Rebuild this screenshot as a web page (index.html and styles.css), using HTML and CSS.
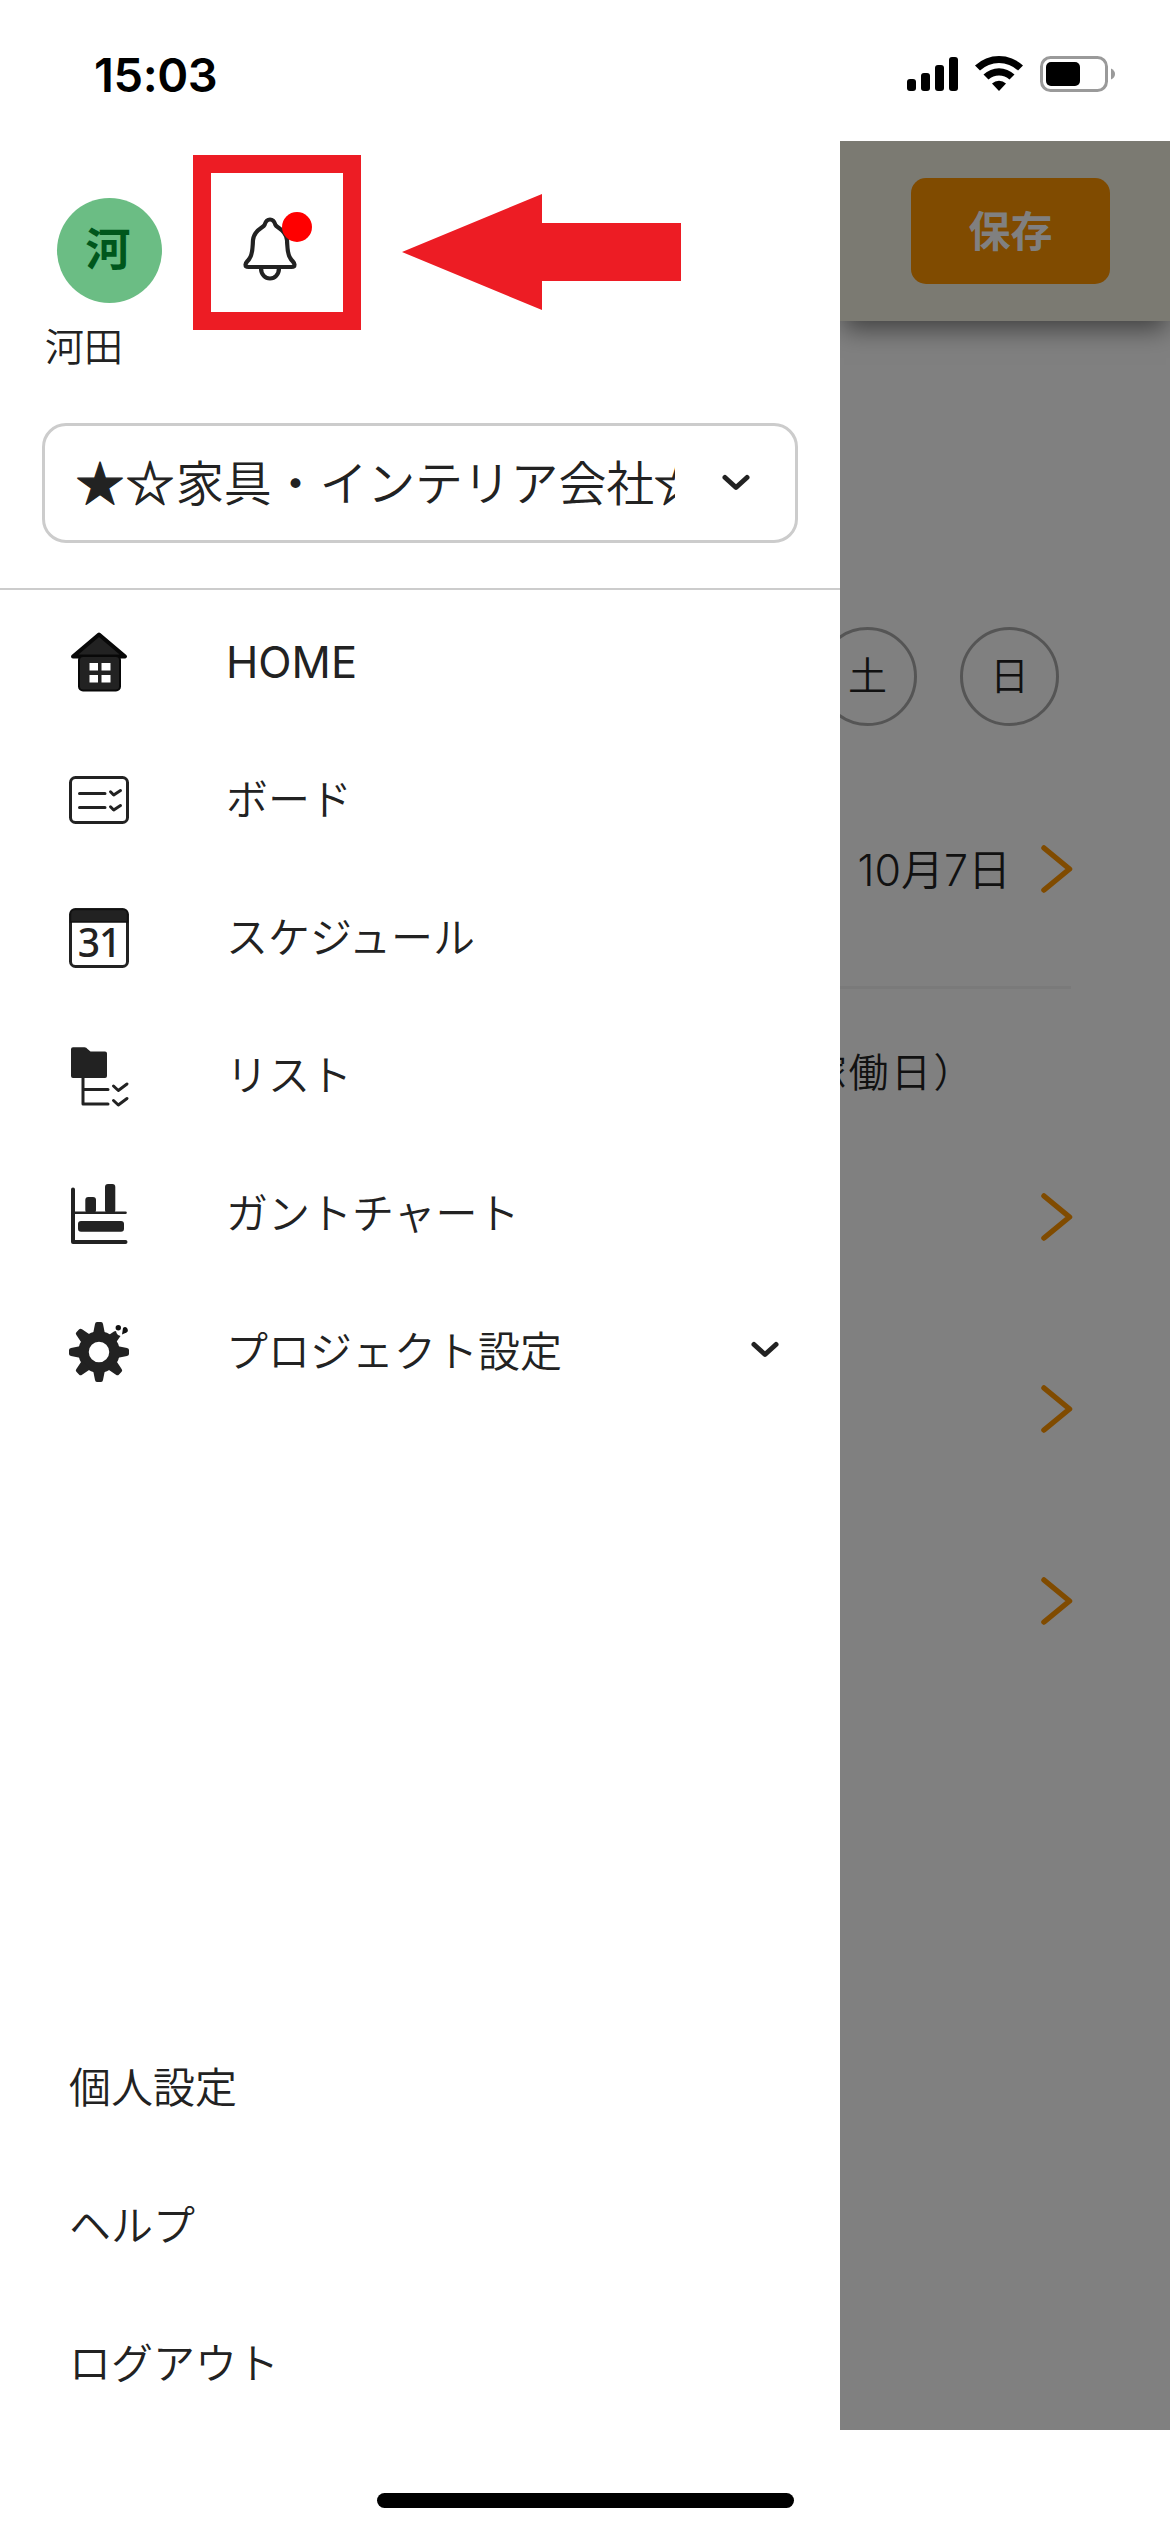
FILE: index.html
```html
<!DOCTYPE html>
<html lang="ja">
<head>
<meta charset="utf-8">
<title>メニュー</title>
<link rel="stylesheet" href="styles.css">
</head>
<body>
<div class="screen">
  <header class="status">
    <span class="time">15:03</span>
    <svg class="status-icons" width="210" height="40" viewBox="906 54 210 40">
      <rect x="907" y="79" width="9" height="12" rx="3"/>
      <rect x="921" y="73" width="9" height="18" rx="3"/>
      <rect x="935" y="65" width="9" height="26" rx="3"/>
      <rect x="949" y="57" width="9" height="34" rx="3"/>
      <path d="M975 65.500A35 35 0 0 1 1023 65.500L1018 70.500A28 28 0 0 0 980 70.500Z"/>
      <path d="M983.500 74.500A22.500 22.500 0 0 1 1014.500 74.500L1009.500 79.500A16 16 0 0 0 988.500 79.500Z"/>
      <path d="M992 83.500A10.500 10.500 0 0 1 1006 83.500L999 91Z"/>
      <rect x="1041.500" y="57.500" width="65" height="33" rx="9" fill="none" stroke="#9a9a9a" stroke-width="3"/>
      <rect x="1046" y="62" width="34" height="24" rx="5"/>
      <path d="M1111 68.500Q1115 70.500 1115 74T1111 79.500Z" fill="#9a9a9a"/>
    </svg>
  </header>

  <div class="content">
    <aside class="drawer">
      <div class="profile">
        <div class="user">
          <div class="avatar">河</div>
          <div class="user-name">河田</div>
        </div>
        <div class="bell">
          <svg width="60" height="70" viewBox="240 213 60 70">
            <path d="M270 219.500C267 219.500 265.500 221.500 264.500 225C263.500 228 254 229.500 253 240C252.500 247 253 254 249.500 258.500C247.500 261.500 245.500 262.500 245.500 264.500Q245.500 267 248.500 267H291.500Q294.500 267 294.500 264.500C294.500 262.500 292.500 261.500 290.500 258.500C287 254 287.500 247 287 240C286 229.500 276.500 228 275.500 225C274.500 221.500 273 219.500 270 219.500ZM261 268C261 282 279 282 279 268" fill="none" stroke="#222" stroke-width="4.200" stroke-linejoin="round"/>
          </svg>
          <span class="badge"></span>
        </div>
        <div class="highlight"></div>
        <svg class="arrow" width="280" height="117" viewBox="0 0 280 117"><path d="M0 58L140 0V29H279V87H140V116Z" fill="#ed1c24"/></svg>
      </div>

      <div class="select">
        <span class="select-text"><span class="stars">★☆</span>家具・インテリア会社<span class="stars">☆</span></span>
        <svg width="28" height="18" viewBox="0 0 28 18" class="chev"><path d="M3 3.500L14 13.500L25 3.500"/></svg>
      </div>

      <nav class="menu">
        <a class="item"><svg class="ico" viewBox="0 0 60 60"><path d="M30 2.500L56 24.500H4Z" fill="#222" stroke="#080808" stroke-width="4" stroke-linejoin="round"/><rect x="10" y="24" width="41" height="34.500" rx="4" fill="#222" stroke="#080808" stroke-width="2"/><path d="M20.500 31H29V38.500H20.500ZM32.500 31H41.500V38.500H32.500ZM20.500 43H29V50.500H20.500ZM32.500 43H41.500V50.500H32.500Z" fill="#fff"/></svg><span class="latin">HOME</span></a>
        <a class="item"><svg class="ico line" viewBox="0 0 60 60"><rect x="1.500" y="7.500" width="57" height="45" rx="5"/><path d="M10.500 23.500H36M10.500 37.500H36M41.500 21.800L44.700 25L51.500 20.500M41.500 36.800L44.700 40L51.500 35.500"/></svg><span>ボード</span></a>
        <a class="item"><svg class="ico" viewBox="0 0 60 60"><rect x="1.500" y="1.500" width="57" height="57" rx="5" fill="none" stroke="#222" stroke-width="3"/><path d="M1.500 14V6Q1.500 1.500 6 1.500H54Q58.500 1.500 58.500 6V14Z" fill="#222" stroke="#111" stroke-width="1.500"/><text x="30" y="49" class="date">31</text></svg><span>スケジュール</span></a>
        <a class="item"><svg class="ico line" viewBox="0 0 60 60"><path d="M4 1.300H15.500Q17.500 1.300 18.500 3L21.500 5.500H36Q38 5.500 38 7.500V30Q38 32 36 32H4Q2 32 2 30V3.300Q2 1.300 4 1.300Z" fill="#222" stroke="none"/><path d="M14 31V58H39M14 43.500H39M44.500 40L49.300 44.500L58 38M44.500 54.500L49.300 59L58 52.500"/></svg><span>リスト</span></a>
        <a class="item"><svg class="ico line" viewBox="0 0 60 60"><path d="M4 5.500V58H56.500" stroke-width="4"/><path d="M4 28.700H56.500" stroke-width="2.600"/><g fill="#222" stroke="none"><rect x="16.300" y="13" width="10.700" height="16" rx="3"/><rect x="36" y="0" width="10.300" height="29" rx="3"/><rect x="9" y="37" width="46" height="10.700" rx="3"/></g></svg><span>ガントチャート</span></a>
        <a class="item"><svg class="ico" viewBox="0 0 60 60"><g fill="#222"><circle cx="30" cy="30" r="15.500" fill="none" stroke="#222" stroke-width="10.500"/><path id="tooth" d="M24 12L26 2Q26.300 0 28 0H32Q33.700 0 34 2L36 12Z"/><use href="#tooth" transform="rotate(90 30 30)"/><use href="#tooth" transform="rotate(135 30 30)"/><use href="#tooth" transform="rotate(180 30 30)"/><use href="#tooth" transform="rotate(225 30 30)"/><use href="#tooth" transform="rotate(270 30 30)"/><use href="#tooth" transform="rotate(315 30 30)"/><path d="M39 13.500L45 9.500Q47.500 8 47.500 11L49 13L51.500 14L46 22Z"/></g><circle cx="49.300" cy="5.700" r="2.700" fill="#111"/><path d="M53 12.500L54 6Q56 4 58 6Q60 9 57.500 10.500Z" fill="#111"/></svg><span>プロジェクト設定</span><svg width="28" height="18" viewBox="0 0 28 18" class="chev"><path d="M3 3.500L14 13.500L25 3.500"/></svg></a>
      </nav>

      <nav class="links">
        <a>個人設定</a>
        <a>ヘルプ</a>
        <a>ログアウト</a>
      </nav>
    </aside>

    <main class="page">
      <div class="toolbar"><button class="save">保存</button></div>
      <div class="days"><span class="day">土</span><span class="day">日</span></div>
      <div class="row date-row"><span class="date-text">10月7日</span><svg class="next" viewBox="0 0 32 48"><path d="M3 3L28.500 24L3 45"/></svg></div>
      <div class="caption">稼働日）</div>
      <div class="row"><svg class="next" viewBox="0 0 32 48"><path d="M3 3L28.500 24L3 45"/></svg></div>
      <div class="row"><svg class="next" viewBox="0 0 32 48"><path d="M3 3L28.500 24L3 45"/></svg></div>
      <div class="row"><svg class="next" viewBox="0 0 32 48"><path d="M3 3L28.500 24L3 45"/></svg></div>
    </main>
  </div>

  <footer class="home"><span class="home-bar"></span></footer>
</div>
</body>
</html>
```
FILE: styles.css
```css
* { box-sizing: border-box; }

body {
  margin: 0;
  background: #fff;
  color: #222;
  font-family: Inter, "Noto Sans CJK JP", sans-serif;
  font-weight: 350;
}

svg { display: block; }

.screen {
  width: 1170px;
  height: 2532px;
  display: flex;
  flex-direction: column;
  overflow: hidden;
}

.status {
  height: 141px;
  padding: 54px 54px 0 94px;
  display: flex;
  justify-content: space-between;
  align-items: flex-start;
  color: #000;
}

.time {
  font-size: 47px;
  line-height: 42px;
  font-weight: 600;
  letter-spacing: -0.4px;
}

.content {
  height: 2289px;
  display: grid;
  grid-template-columns: 840px 330px;
}

.drawer {
  display: flex;
  flex-direction: column;
}

.profile {
  position: relative;
  height: 282px;
  padding: 57px 0 0 45px;
  display: flex;
}

.avatar {
  width: 105px;
  height: 105px;
  margin-left: 12px;
  padding-right: 3px;
  border-radius: 50%;
  background: #6bbd84;
  color: #00571c;
  font-size: 45px;
  font-weight: 700;
  line-height: 103px;
  text-align: center;
}

.user-name {
  margin-top: 15px;
  font-size: 39px;
  line-height: 58px;
}

.bell {
  position: relative;
  margin: 15px 0 0 78px;
}

.badge {
  position: absolute;
  left: 42px;
  top: -1px;
  width: 30px;
  height: 30px;
  border-radius: 50%;
  background: #f00;
}

.highlight {
  position: absolute;
  left: 193px;
  top: 14px;
  width: 168px;
  height: 175px;
  border: 18px solid #ed1c24;
}

.arrow {
  position: absolute;
  left: 402px;
  top: 53px;
}

.select {
  width: 756px;
  height: 120px;
  margin-left: 42px;
  padding: 0 45px 0 31px;
  display: flex;
  align-items: center;
  justify-content: space-between;
  border: 3px solid #ccc;
  border-radius: 24px;
}

.select-text {
  width: 599px;
  margin-top: -3px;
  overflow: hidden;
  white-space: nowrap;
  font-size: 48px;
  line-height: 72px;
  letter-spacing: -0.2px;
}

.stars {
  font-family: "Noto Sans CJK JP", sans-serif;
  letter-spacing: 2px;
  -webkit-text-stroke: 1.2px #222;
}

.chev {
  fill: none;
  stroke: #222;
  stroke-width: 5;
  stroke-linecap: round;
  stroke-linejoin: round;
}

.menu {
  margin-top: 45px;
  padding-top: 3px;
  border-top: 2px solid #ccc;
}

.item {
  height: 138px;
  padding: 0 61px 0 69px;
  display: flex;
  align-items: center;
  font-size: 42px;
}

.item span { margin: -7px 0 0 97px; }
.item .latin { margin-top: 0; font-size: 43.5px; font-weight: 400; }
.item .chev { margin: -4px 0 0 auto; }

.ico { width: 60px; height: 60px; overflow: visible; }

.line {
  fill: none;
  stroke: #222;
  stroke-width: 3;
  stroke-linecap: round;
  stroke-linejoin: round;
}

.date {
  font-family: "Noto Sans", sans-serif;
  font-size: 39px;
  font-weight: 500;
  letter-spacing: -1px;
  text-anchor: middle;
  fill: #222;
}

.links {
  margin-top: auto;
  padding-left: 69px;
  display: flex;
  flex-direction: column;
  font-size: 42px;
}

.links a {
  height: 138px;
  padding-top: 3px;
  line-height: 138px;
}

.page {
  background: #808080;
  color: #111;
  overflow: hidden;
}

.toolbar {
  height: 180px;
  padding: 37px 60px;
  display: flex;
  justify-content: flex-end;
  background: #7b7a72;
  box-shadow: 0 12px 24px -4px rgba(0, 0, 0, 0.5);
}

.save {
  width: 199px;
  height: 106px;
  padding: 0 0 5px;
  border: 0;
  border-radius: 15px;
  background: #804b00;
  color: #808080;
  font: 700 42px "Noto Sans CJK JP", sans-serif;
}

.days {
  height: 99px;
  margin: 306px 111px 0 0;
  display: flex;
  justify-content: flex-end;
  gap: 43px;
}

.day {
  flex: none;
  width: 99px;
  height: 99px;
  border: 3px solid #555;
  border-radius: 50%;
  font-size: 39px;
  line-height: 92px;
  text-align: center;
}

.row {
  height: 192px;
  margin-right: 97px;
  display: flex;
  align-items: center;
  justify-content: flex-end;
  font-size: 43px;
}

.date-row {
  height: 239px;
  margin-top: 24px;
  margin-right: 99px;
  border-bottom: 3px solid #7a7a7a;
}

.date-text { margin-top: -3px; font-weight: 350; }

.date-row .next { margin: 1px -2px 0 30px; }

.next {
  width: 32px;
  height: 48px;
  fill: none;
  stroke: #804b00;
  stroke-width: 5.5;
  stroke-linecap: round;
  stroke-linejoin: round;
}

.caption {
  height: 132px;
  padding: 55px 194px 0 0;
  display: flex;
  justify-content: flex-end;
  white-space: nowrap;
  font-size: 40px;
  line-height: 58px;
  letter-spacing: 2.5px;
}

.home {
  height: 102px;
  padding: 63px 0 0 377px;
}

.home-bar {
  display: block;
  width: 417px;
  height: 15px;
  border-radius: 8px;
  background: #000;
}
```
